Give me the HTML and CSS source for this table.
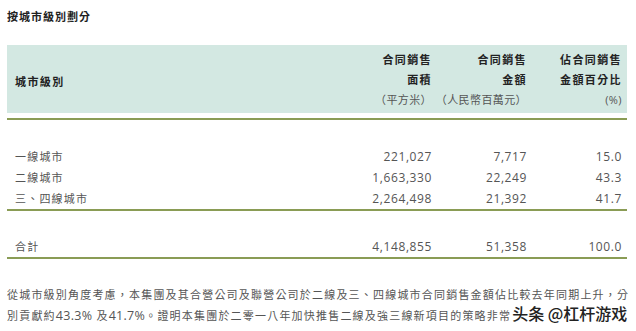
FILE: index.html
```html
<!DOCTYPE html>
<html lang="zh-Hant">
<head>
    <meta charset="UTF-8">
    <meta name="viewport" content="width=device-width, initial-scale=1.0">
    <title>按城市級別劃分</title>
    <link rel="stylesheet" href="styles.css">
</head>
<body>
    <h2 class="title">按城市級別劃分</h2>

    <div class="sales">
        <!-- table head -->
        <div class="sales-head">
            <div class="cell label head-label">城市級別</div>
            <div class="cell num">合同銷售<br>面積<br><span class="unit">（平方米）</span></div>
            <div class="cell num">合同銷售<br>金額<br><span class="unit">（人民幣百萬元）</span></div>
            <div class="cell num">佔合同銷售<br>金額百分比<br><span class="unit">(%)</span></div>
        </div>
        <div class="rule"></div>

        <div class="sales-body">
            <div class="row">
                <div class="cell label">一線城市</div>
                <div class="cell num fig">221,027</div>
                <div class="cell num fig">7,717</div>
                <div class="cell num fig">15.0</div>
            </div>
            <div class="row">
                <div class="cell label">二線城市</div>
                <div class="cell num fig">1,663,330</div>
                <div class="cell num fig">22,249</div>
                <div class="cell num fig">43.3</div>
            </div>
            <div class="row">
                <div class="cell label">三、四線城市</div>
                <div class="cell num fig">2,264,498</div>
                <div class="cell num fig">21,392</div>
                <div class="cell num fig">41.7</div>
            </div>
        </div>
        <div class="rule"></div>

        <div class="sales-total">
            <div class="row">
                <div class="cell label">合計</div>
                <div class="cell num fig">4,148,855</div>
                <div class="cell num fig">51,358</div>
                <div class="cell num fig">100.0</div>
            </div>
        </div>
        <div class="rule"></div>
    </div>

    <p class="note">
        <span class="line">從城市級別角度考慮，本集團及其合營公司及聯營公司於二線及三、四線城市合同銷售金額佔比較去年同期上升，分</span>
        <span class="line">別貢獻約<span class="fig">43.3%</span> 及<span class="fig">41.7%</span>。證明本集團於二零一八年加快推售二線及強三線新項目的策略非常<span class="mark">头条 @杠杆游戏</span></span>
    </p>
</body>
</html>
```

FILE: styles.css
```css
body {
    font-family: "Open Sans", "Noto Sans CJK TC", sans-serif;
    margin: 7px 7px 0 7px;
    color: #555;
    background: #fff;
}

.title {
    margin: 0 0 18px 0;
    font-size: 11px;
    line-height: 20px;
    letter-spacing: 1px;
    font-weight: bold;
    color: #222;
}

.sales {
    width: 620px;
}

.sales-head,
.row {
    display: grid;
    grid-template-columns: 1fr 95px 95px 95px;
    padding: 0 5px 0 8px;
}

.sales-head {
    background-color: #d3e8e2;
    padding-top: 5px;
    padding-bottom: 3px;
    font-size: 11px;
    line-height: 20px;
    letter-spacing: 1.4px;
    font-weight: bold;
    color: #222;
    margin-bottom: 5px;
}

.head-label {
    align-self: center;
    padding-top: 3px;
}

.unit {
    font-weight: normal;
    color: #555;
    letter-spacing: 0.4px;
}

.cell.num {
    text-align: right;
}

.rule {
    height: 2px;
    background-color: #8a9c55;
}

.sales-body {
    padding-top: 26px;
}

.sales-total {
    padding-top: 25px;
}

.row {
    font-size: 11px;
    line-height: 21px;
    letter-spacing: 1.2px;
}

.fig {
    font-size: 12px;
    letter-spacing: 0.6px;
}

.note {
    margin: 26px 0 0 0;
    font-size: 11px;
    line-height: 19px;
    letter-spacing: 1.2px;
}

.note .fig {
    font-size: 12.5px;
    letter-spacing: 0.3px;
}

.note .line {
    display: block;
    white-space: nowrap;
}

.mark {
    font-family: "Noto Sans CJK SC", sans-serif;
    font-size: 16px;
    line-height: 19px;
    font-weight: 500;
    letter-spacing: 0;
    color: #222;
    margin-left: 1px;
}
```
